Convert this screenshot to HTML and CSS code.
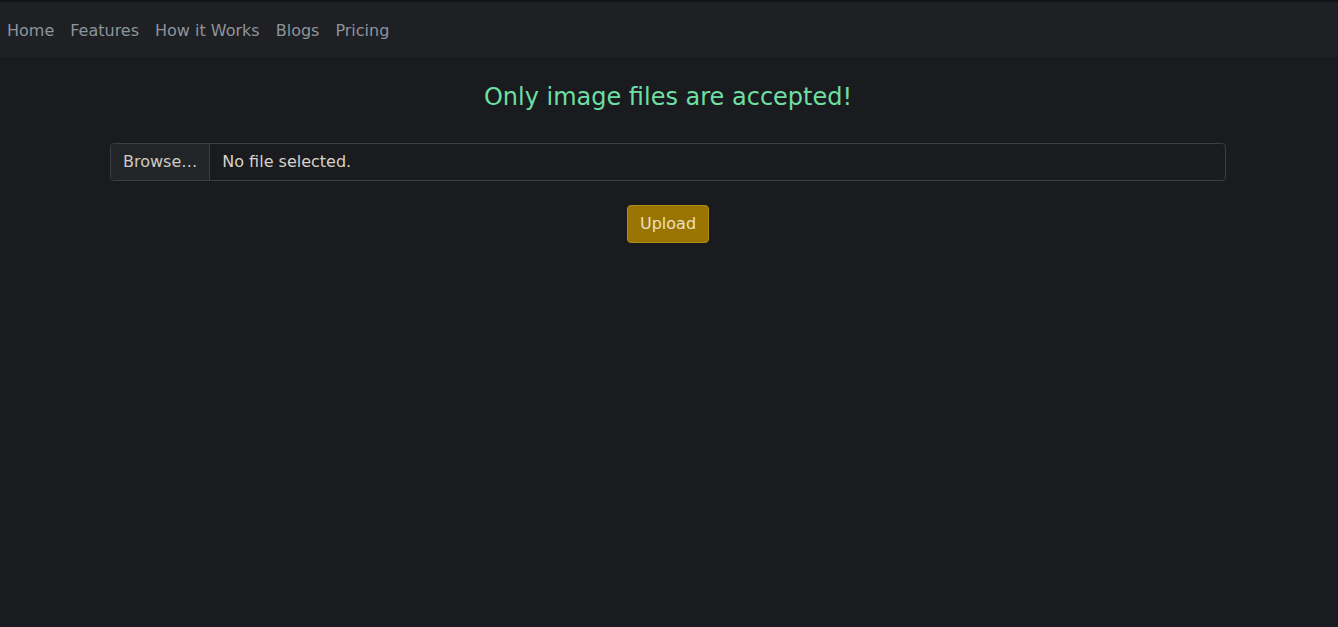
FILE: index.html
```html
<!DOCTYPE html>
<html lang="en">
<head>
    <meta charset="UTF-8">
    <meta name="viewport" content="width=device-width, initial-scale=1.0">
    <title>Upload</title>
    <link rel="stylesheet" href="styles.css">
</head>
<body>
    <nav class="navbar">
        <ul class="nav-links">
            <li><a href="#">Home</a></li>
            <li><a href="#">Features</a></li>
            <li><a href="#">How it Works</a></li>
            <li><a href="#">Blogs</a></li>
            <li><a href="#">Pricing</a></li>
        </ul>
    </nav>

    <div class="container">
        <h4 class="notice">Only image files are accepted!</h4>

        <!-- file picker -->
        <div class="file-input">
            <span class="file-browse">Browse…</span>
            <span class="file-name">No file selected.</span>
        </div>

        <div class="actions">
            <button class="btn-upload">Upload</button>
        </div>
    </div>
</body>
</html>
```

FILE: styles.css
```css
* {
    box-sizing: border-box;
}

body {
    margin: 0;
    font-family: "DejaVu Sans", sans-serif;
    font-size: 16px;
    background-color: #1a1b1e;
    color: #d6d2cb;
}

.navbar {
    height: 57px;
    padding-top: 2px;
    background-color: #1e2023;
    border-top: 2px solid #121315;
    display: flex;
    align-items: center;
}

.nav-links {
    list-style: none;
    margin: 0;
    padding: 0 0 0 7px;
    display: flex;
    gap: 16px;
}

.nav-links a {
    color: #8d949c;
    text-decoration: none;
    line-height: 24px;
}

.container {
    width: 1116px;
    margin: 0 auto;
    transform: translateX(-1px);
}

.notice {
    margin: 26px 0 31px;
    text-align: center;
    font-size: 24px;
    font-weight: normal;
    line-height: 29px;
    color: #6ddfa2;
}

.file-input {
    display: flex;
    height: 38px;
    border: 1px solid #3b3e42;
    border-radius: 4px;
    overflow: hidden;
}

.file-browse {
    display: flex;
    align-items: center;
    padding: 0 12px 2px;
    background-color: #222528;
    border-right: 1px solid #3b3e42;
    color: #cfcac2;
}

.file-name {
    display: flex;
    align-items: center;
    padding: 0 12px 2px;
    color: #d6d2cb;
}

.actions {
    display: flex;
    justify-content: center;
    margin-top: 24px;
}

.btn-upload {
    height: 38px;
    padding: 0 12px 2px;
    font-family: inherit;
    font-size: 16px;
    background-color: #9a7400;
    border: 1px solid #b28a12;
    border-radius: 4px;
    color: #ebe0c6;
    cursor: pointer;
}
```
